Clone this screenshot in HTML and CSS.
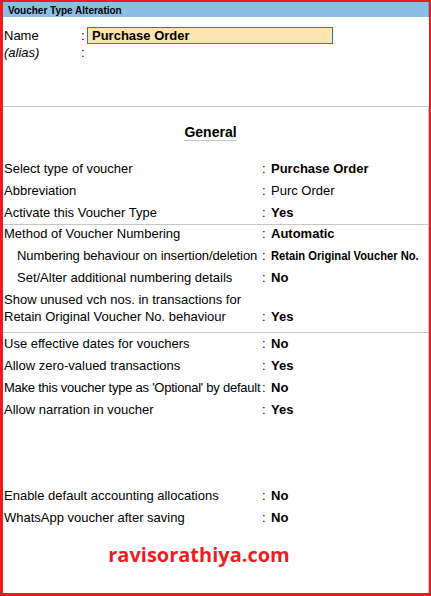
FILE: index.html
```html
<!DOCTYPE html>
<html lang="en">
<head>
<meta charset="UTF-8">
<meta name="viewport" content="width=device-width, initial-scale=1.0">
<title>Voucher Type Alteration</title>
<link rel="stylesheet" href="styles.css">
</head>
<body>
<div class="window">
    <div class="titlebar">Voucher Type Alteration</div>
    <div class="head">
        <div class="field">
            <span class="label">Name</span><span class="colon">:</span><span class="name-box">Purchase Order</span>
        </div>
        <div class="field">
            <span class="label alias">(alias)</span><span class="colon">:</span><span></span>
        </div>
    </div>
    <div class="panel">
        <div class="section-title"><span>General</span></div>

        <div class="group first">
            <div class="row"><span class="label">Select type of voucher</span><span class="colon">:</span><span class="value strong">Purchase Order</span></div>
            <div class="row"><span class="label">Abbreviation</span><span class="colon">:</span><span class="value">Purc Order</span></div>
            <div class="row"><span class="label">Activate this Voucher Type</span><span class="colon">:</span><span class="value strong">Yes</span></div>
        </div>

        <div class="group sep numbering">
            <div class="row tight"><span class="label">Method of Voucher Numbering</span><span class="colon">:</span><span class="value strong">Automatic</span></div>
            <div class="row sub"><span class="label squeeze">Numbering behaviour on insertion/deletion</span><span class="colon">:</span><span class="value strong"><span class="narrow">Retain Original Voucher No.</span></span></div>
            <div class="row sub"><span class="label">Set/Alter additional numbering details</span><span class="colon">:</span><span class="value strong">No</span></div>
            <div class="row"><span class="label">Show unused vch nos. in transactions for<br>Retain Original Voucher No. behaviour</span><span class="colon">:</span><span class="value strong">Yes</span></div>
        </div>

        <div class="group sep">
            <div class="row"><span class="label">Use effective dates for vouchers</span><span class="colon">:</span><span class="value strong">No</span></div>
            <div class="row"><span class="label">Allow zero-valued transactions</span><span class="colon">:</span><span class="value strong">Yes</span></div>
            <div class="row"><span class="label squeeze-more">Make this voucher type as 'Optional' by default</span><span class="colon">:</span><span class="value strong">No</span></div>
            <div class="row"><span class="label">Allow narration in voucher</span><span class="colon">:</span><span class="value strong">Yes</span></div>
        </div>

        <div class="group extra">
            <div class="row"><span class="label">Enable default accounting allocations</span><span class="colon">:</span><span class="value strong">No</span></div>
            <div class="row"><span class="label">WhatsApp voucher after saving</span><span class="colon">:</span><span class="value strong">No</span></div>
        </div>

        <div class="brand">ravisorathiya.com</div>
    </div>
</div>
</body>
</html>
```

FILE: styles.css
```css
body {
    margin: 0;
    background-color: #ed1c24;
    font-family: "Liberation Sans", Arial, sans-serif;
    font-size: 13px;
    color: #000;
}
.window {
    margin: 2px 2px 3px 3px;
    height: 591px;
    background-color: #fff;
    display: flex;
    flex-direction: column;
}
.titlebar {
    height: 15px;
    box-sizing: border-box;
    padding: 2px 0 0 5px;
    line-height: 13px;
    font-size: 10px;
    font-weight: bold;
    background-color: #8bbde6;
    border-right: 1px solid #6a9fd0;
}
.head {
    height: 89px;
    box-sizing: border-box;
    padding-top: 10px;
}
.field {
    display: grid;
    grid-template-columns: 77px 6px 246px;
    align-items: center;
    height: 17px;
    line-height: 17px;
    padding-left: 1px;
}
.name-box {
    height: 17px;
    box-sizing: border-box;
    border: 1px solid #1c7ac0;
    background-color: #fde5b1;
    font-weight: bold;
    line-height: 15px;
    padding-left: 4px;
}
.alias {
    font-style: italic;
}
.panel {
    flex: 1;
    border-top: 1px solid #c6c6c6;
    border-right: 1px solid #c6c6c6;
}
.section-title {
    text-align: center;
    padding: 17px 10px 0 0;
    font-size: 14px;
    font-weight: bold;
    line-height: 16px;
}
.section-title span {
    display: inline-block;
    border-bottom: 1px solid #c6c6c6;
}
.group.first {
    margin-top: 17px;
}
.group.sep {
    border-top: 1px solid #c6c6c6;
}
.group.numbering {
    padding-bottom: 4px;
}
.group.extra {
    margin-top: 64px;
}
.row {
    display: grid;
    grid-template-columns: 258px 9px 1fr;
    align-items: end;
    padding: 2px 0 3px 1px;
    line-height: 17px;
}
.row.tight {
    padding-top: 0;
}
.row .label {
    white-space: nowrap;
}
.row.sub .label {
    padding-left: 13px;
}
.row .label.squeeze {
    letter-spacing: -0.1px;
}
.row .label.squeeze-more {
    letter-spacing: -0.25px;
}
.value.strong {
    font-weight: bold;
}
.narrow {
    display: inline-block;
    white-space: nowrap;
    transform: scaleX(0.86);
    transform-origin: left center;
}
.brand {
    margin-top: 14px;
    padding-right: 33px;
    text-align: center;
    font-family: "Open Sans", sans-serif;
    font-size: 20px;
    font-weight: bold;
    line-height: 24px;
    color: #ed1c24;
}
```
